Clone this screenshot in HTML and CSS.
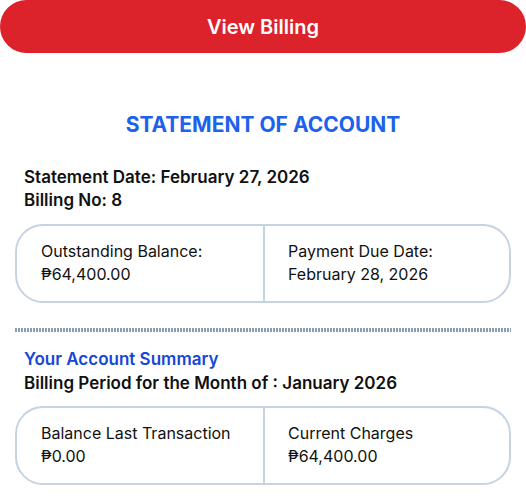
FILE: index.html
```html
<!DOCTYPE html>
<html lang="en">
<head>
    <meta charset="UTF-8">
    <meta name="viewport" content="width=device-width, initial-scale=1.0">
    <title>Statement of Account</title>
    <link rel="stylesheet" href="styles.css">
</head>
<body>
    <button class="view-btn">View Billing</button>

    <div class="statement">
        <h1 class="statement-title">STATEMENT OF ACCOUNT</h1>

        <div class="meta">
            <div>Statement Date: February 27, 2026</div>
            <div>Billing No: 8</div>
        </div>

        <div class="info-card">
            <div class="info-cell">
                <div>Outstanding Balance:</div>
                <div>₱64,400.00</div>
            </div>
            <div class="info-cell">
                <div>Payment Due Date:</div>
                <div>February 28, 2026</div>
            </div>
        </div>

        <div class="dotted"></div>

        <div class="summary">
            <div class="summary-title">Your Account Summary</div>
            <div class="summary-period">Billing Period for the Month of : January 2026</div>
        </div>

        <div class="info-card">
            <div class="info-cell">
                <div>Balance Last Transaction</div>
                <div>₱0.00</div>
            </div>
            <div class="info-cell">
                <div>Current Charges</div>
                <div>₱64,400.00</div>
            </div>
        </div>
    </div>
</body>
</html>
```

FILE: styles.css
```css
* {
    margin: 0;
    padding: 0;
    box-sizing: border-box;
}

body {
    font-family: Inter, 'Noto Sans', sans-serif;
    background: #fff;
    color: #111;
    width: 526px;
}

.view-btn {
    display: block;
    width: 100%;
    height: 53px;
    border: none;
    border-radius: 27px;
    background: #dc222b;
    color: #fff;
    font-family: inherit;
    font-size: 20px;
    font-weight: 600;
}

.statement {
    padding: 0 15px;
}

.statement-title {
    margin-top: 60px;
    text-align: center;
    font-size: 21px;
    line-height: 24px;
    font-weight: 700;
    color: #1c62ea;
}

.meta {
    margin-top: 29px;
    padding-left: 9px;
    font-size: 17px;
    line-height: 23px;
    font-weight: 600;
}

.info-card {
    display: grid;
    grid-template-columns: 1fr 1fr;
    margin-top: 12px;
    border: 2px solid #c6d3e2;
    border-radius: 28px;
}

.info-cell {
    padding: 14px 24px 15px;
    font-size: 16px;
    line-height: 23px;
}

.info-cell + .info-cell {
    border-left: 2px solid #c6d3e2;
    padding-left: 23px;
}

.dotted {
    height: 4px;
    margin-top: 25px;
    background: repeating-linear-gradient(90deg, #8d9cb5 0 2px, transparent 2px 3px);
}

.summary {
    margin-top: 15px;
    padding-left: 9px;
    font-size: 17px;
    line-height: 24px;
    font-weight: 600;
}

.summary-title {
    color: #1646d8;
}

.summary + .info-card {
    margin-top: 11px;
}
```
